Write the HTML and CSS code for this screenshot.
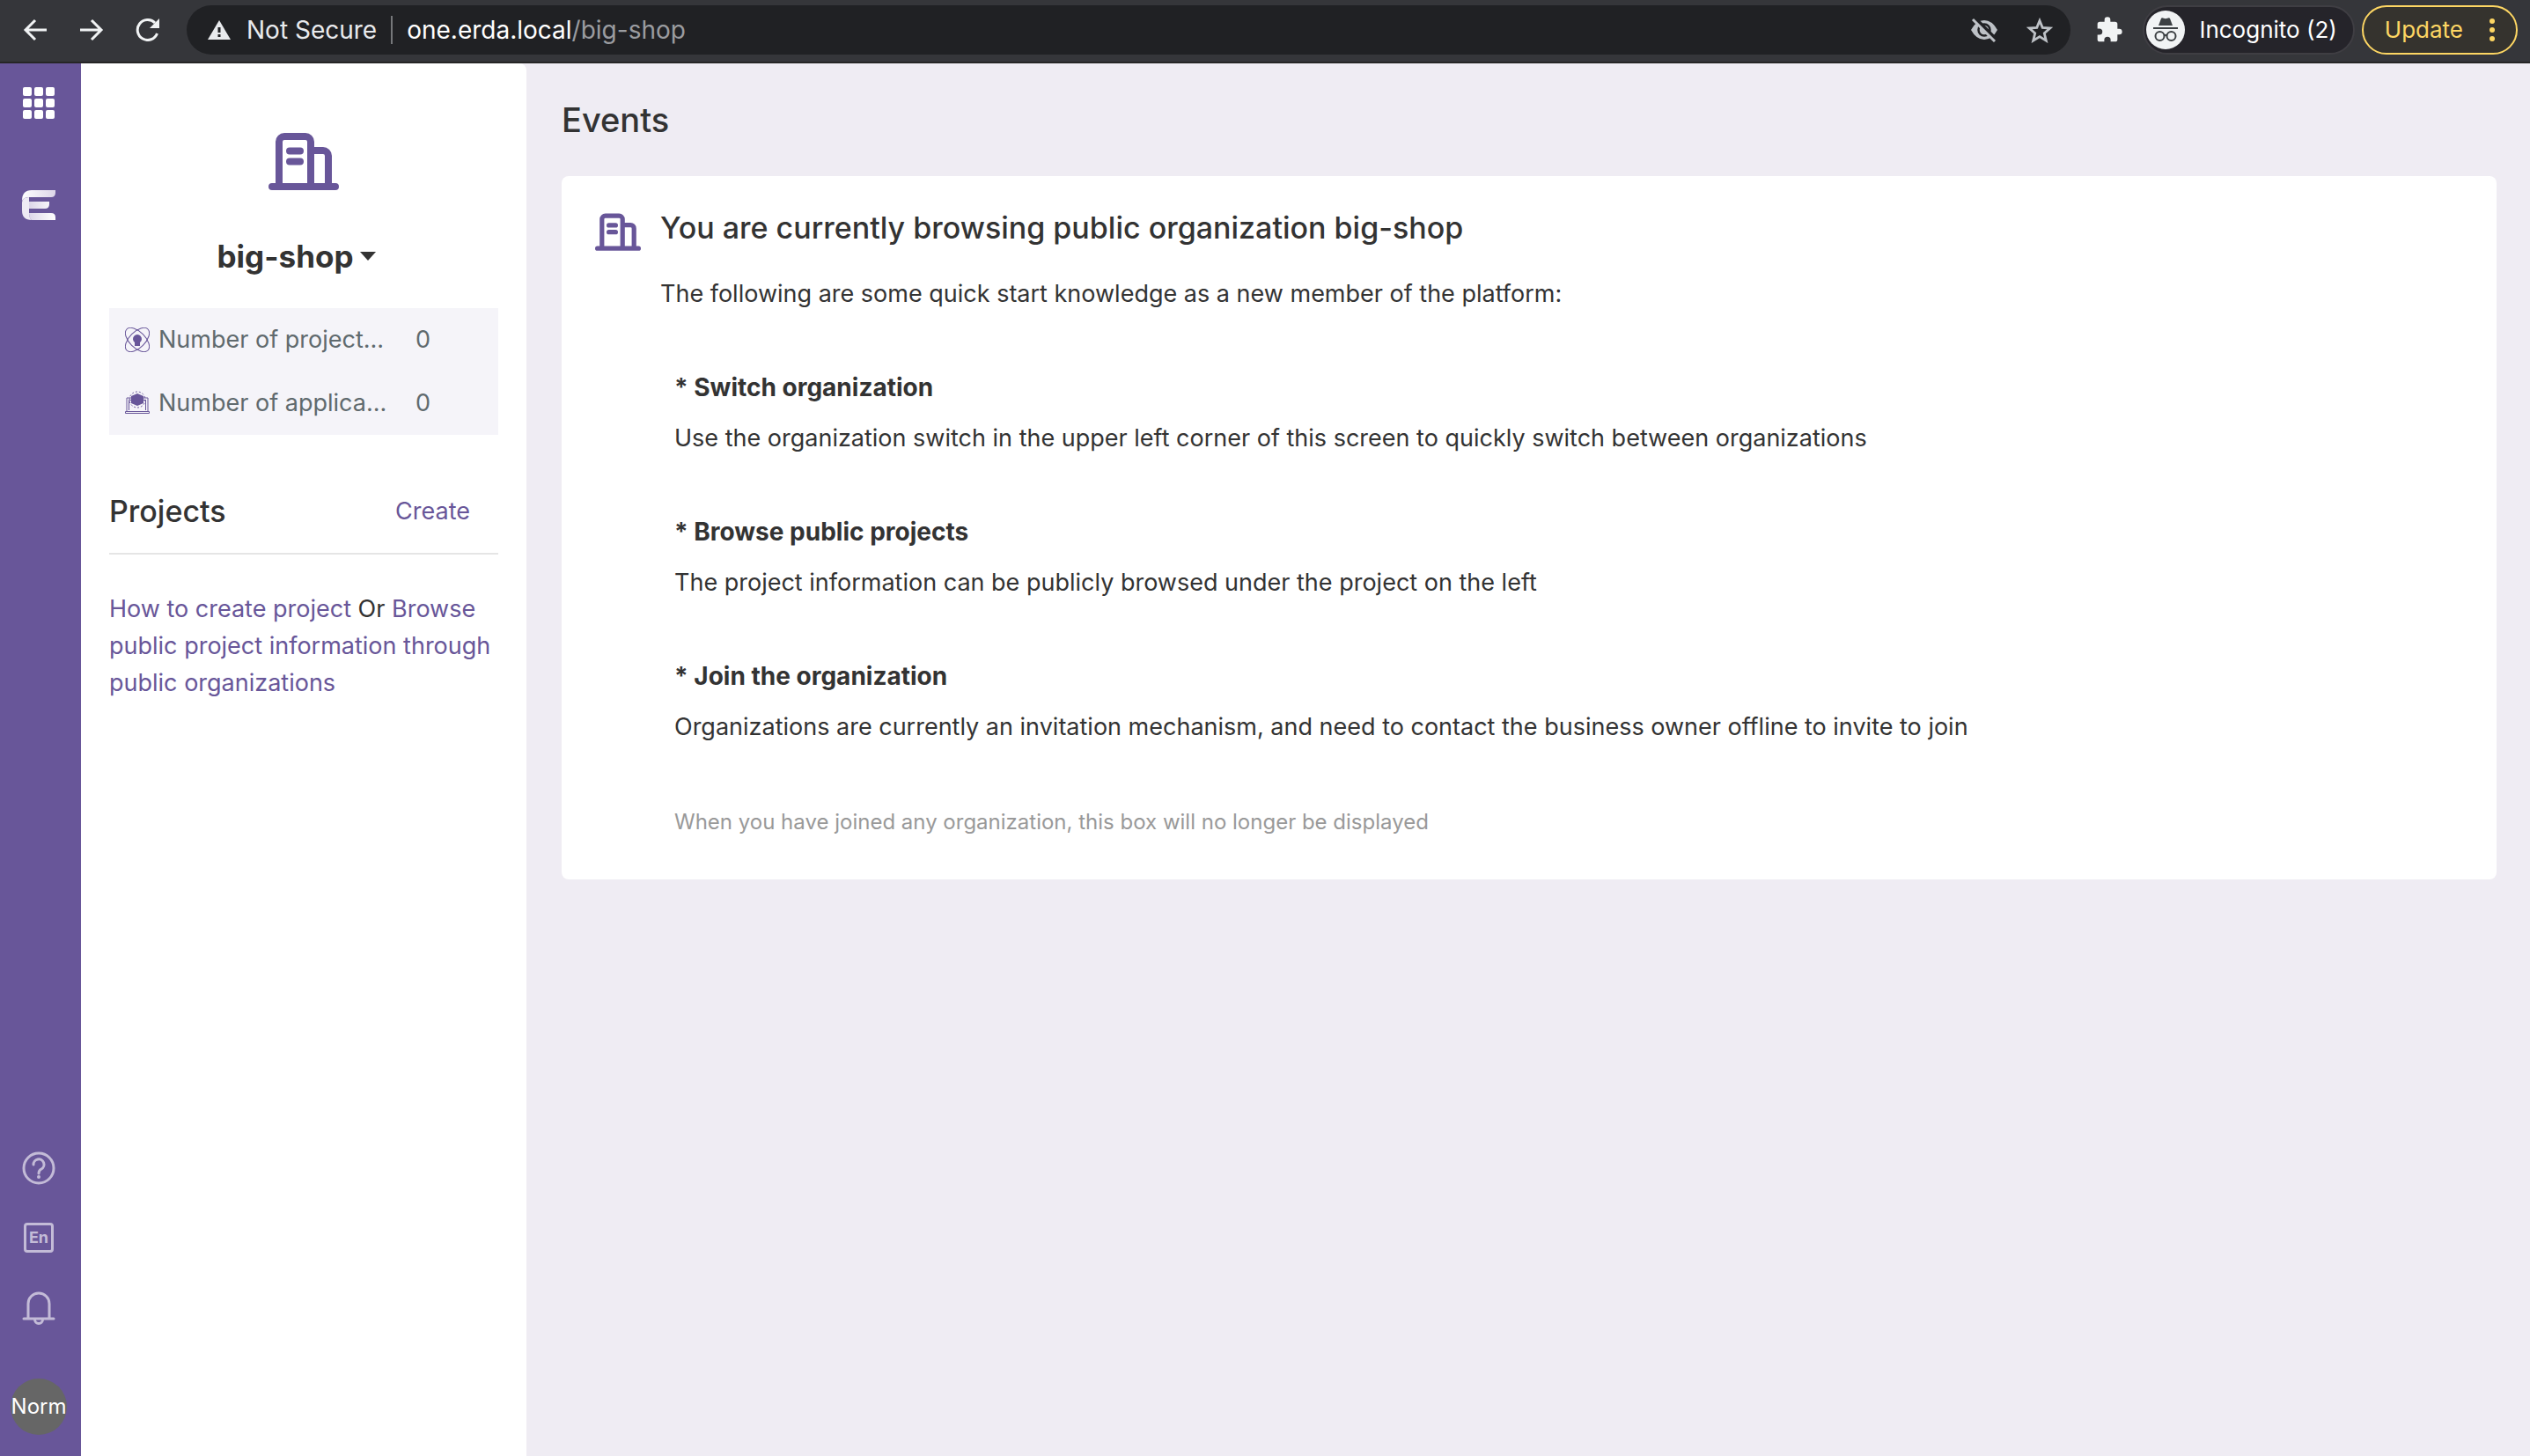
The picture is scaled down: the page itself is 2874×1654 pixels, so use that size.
FILE: index.html
```html
<!DOCTYPE html>
<html lang="en">
<head>
<meta charset="utf-8">
<title>big-shop</title>
<meta name="viewport" content="width=device-width, initial-scale=1">
<link rel="stylesheet" href="styles.css">
</head>
<body>
<svg class="defs" aria-hidden="true">
  <symbol id="building" viewBox="0 0 80 66">
    <path d="M12 60V10a6 6 0 0 1 6-6h24a6 6 0 0 1 6 6v50M50 20h12a6 6 0 0 1 6 6v34M4 61h72" fill="none" stroke="currentColor" stroke-width="8" stroke-linecap="round"/>
    <path d="M24 20.500h12M24 32.500h12" fill="none" stroke="currentColor" stroke-width="8" stroke-linecap="round"/>
  </symbol>
</svg>
<header class="browser">
  <button class="tool" aria-label="Back"><svg width="28" height="26" viewBox="0 0 28 26"><path d="M27 13H3M14 2 3 13l11 11" fill="none" stroke="currentColor" stroke-width="3"/></svg></button>
  <button class="tool" aria-label="Forward"><svg width="28" height="26" viewBox="0 0 28 26"><path d="M1 13h24M14 2l11 11-11 11" fill="none" stroke="currentColor" stroke-width="3"/></svg></button>
  <button class="tool" aria-label="Reload"><svg width="28" height="26" viewBox="0 0 28 26"><path d="M22 5A11.500 11.500 0 1 0 24.500 17" fill="none" stroke="currentColor" stroke-width="3"/><path d="M27 0v11H16z" fill="currentColor"/></svg></button>
  <div class="omnibox">
    <svg width="26" height="22" viewBox="0 0 26 22"><path d="M13 0 26 22H0z" fill="currentColor"/><path d="M13 8v6M13 16v3" stroke="#202124" stroke-width="3"/></svg>
    <span class="security">Not Secure</span>
    <span class="url"><b>one.erda.local</b>/big-shop</span>
    <button class="boxtool" aria-label="Cookies blocked"><svg width="32" height="28" viewBox="0 0 32 28"><path d="M1 14Q7 3 16 3t15 11q-6 11-15 11T1 14z" fill="currentColor"/><circle cx="16" cy="14" r="6.500" fill="none" stroke="#202124" stroke-width="2.500"/><path d="M5 0 31 26" stroke="#202124" stroke-width="4"/><path d="M3 2l25 25" stroke="currentColor" stroke-width="3"/></svg></button>
    <button class="boxtool" aria-label="Bookmark"><svg width="30" height="29" viewBox="0 0 30 29"><path d="M15 3.500l3.200 7.800 8.600.7-6.500 5.700 2 8.400-7.300-4.500-7.300 4.500 2-8.400L3.200 12l8.600-.7z" fill="none" stroke="currentColor" stroke-width="2.800"/></svg></button>
  </div>
  <button class="tool" aria-label="Extensions"><svg width="32" height="32" viewBox="0 0 24 24"><path d="M20.500 11H19V7a2 2 0 0 0-2-2h-4V3.500a2.500 2.500 0 0 0-5 0V5H4a2 2 0 0 0-2 2v3.800h1.500a2.700 2.700 0 0 1 0 5.400H2V20a2 2 0 0 0 2 2h3.800v-1.500a2.700 2.700 0 0 1 5.400 0V22H17a2 2 0 0 0 2-2v-4h1.500a2.500 2.500 0 0 0 0-5z" fill="currentColor"/></svg></button>
  <button class="profile"><svg width="44" height="44" viewBox="0 0 44 44"><circle cx="22" cy="22" r="22" fill="#f1f3f4"/><path d="M14 17l3-8q.5-1 2-.6l3 .8 3-.8q1.500-.4 2 .6l3 8zM8 19h28v2H8z" fill="#3c4043"/><g fill="none" stroke="#3c4043" stroke-width="2"><circle cx="15.500" cy="29" r="5"/><circle cx="28.500" cy="29" r="5"/><path d="M20.500 28.500q1.500-1.500 3 0"/></g></svg>Incognito (2)</button>
  <button class="update">Update<svg width="6" height="26" viewBox="0 0 6 26"><g fill="currentColor"><circle cx="3" cy="3" r="3"/><circle cx="3" cy="13" r="3"/><circle cx="3" cy="23" r="3"/></g></svg></button>
</header>
<div class="app">
  <nav class="rail">
    <button aria-label="Applications"><svg width="36" height="36" viewBox="0 0 36 36"><g fill="#fff"><rect width="10" height="10" rx="2"/><rect x="13" width="10" height="10" rx="2"/><rect x="26" width="10" height="10" rx="2"/><rect y="13" width="10" height="10" rx="2"/><rect x="13" y="13" width="10" height="10" rx="2"/><rect x="26" y="13" width="10" height="10" rx="2"/><rect y="26" width="10" height="10" rx="2"/><rect x="13" y="26" width="10" height="10" rx="2"/><rect x="26" y="26" width="10" height="10" rx="2"/></g></svg></button>
    <a class="logo" href="#" aria-label="Erda"><svg width="38" height="34" viewBox="0 0 38 34"><defs><linearGradient id="fade"><stop offset="0" stop-color="#fff"/><stop offset="1" stop-color="#dcd6e8"/></linearGradient><linearGradient id="rise"><stop offset="0" stop-color="#dcd6e8"/><stop offset="1" stop-color="#fff"/></linearGradient></defs><path d="M0 12Q0 0 11 0h27v3q0 5-5 5H8q-6 0-8 4z" fill="url(#fade)"/><path d="M8 8Q0 8 0 14v9q0 11 11 11-3-3-3-8V8z" fill="#eeeaf4"/><path d="M8 13h23v3q0 5-5 5H8zM8 26h25q5 0 5 5v3H11q-3-2-3-8z" fill="url(#rise)"/></svg></a>
    <button class="help" aria-label="Help"><svg width="38" height="38" viewBox="0 0 38 38"><g fill="none" stroke="currentColor" stroke-width="3"><circle cx="19" cy="19" r="17"/><path d="M13 15a6 6 0 1 1 9 5q-3 1.500-3 5" stroke-linecap="round"/></g><circle cx="19" cy="29" r="2" fill="currentColor"/></svg></button>
    <button class="lang" aria-label="Language: English">En</button>
    <button aria-label="Notifications"><svg width="38" height="38" viewBox="0 0 38 38"><g fill="none" stroke="currentColor" stroke-width="3" stroke-linecap="round"><path d="M7 31V14a12 12 0 0 1 24 0v17M2 31h34M14.500 32a4.500 4.500 0 0 0 9 0"/></g></svg></button>
    <button class="avatar">Norm</button>
  </nav>
  <aside class="side">
    <svg class="org-icon" width="80" height="66"><use href="#building"/></svg>
    <button class="org">big-shop<i class="caret"></i></button>
    <dl class="stats">
      <div><svg width="28" height="28" viewBox="0 0 28 28"><g fill="none" stroke="currentColor" stroke-width="1"><ellipse cx="14" cy="14" rx="17" ry="9" transform="rotate(45 14 14)"/><ellipse cx="14" cy="14" rx="17" ry="9" transform="rotate(-45 14 14)"/></g><path d="M11 21v-4a5 5 0 1 1 6 0v4z" fill="currentColor"/></svg><dt>Number of project...</dt><dd>0</dd></div>
      <div><svg width="28" height="28" viewBox="0 0 28 28"><g fill="none" stroke="currentColor"><path d="M2 23V8h24v15M.5 23.500h27v2H.5zM4.500 22V10.500h19V22"/><circle cx="14" cy="10" r="9" stroke-dasharray="2 2"/></g><path d="M14 3l7 3v8l-7 3-7-3V6z" fill="currentColor"/></svg><dt>Number of applica...</dt><dd>0</dd></div>
    </dl>
    <div class="projects"><h2>Projects</h2><a href="#">Create</a></div>
    <p class="guide"><a href="#">How to create project</a> Or <a href="#">Browse public project information through public organizations</a></p>
  </aside>
  <main>
    <h1>Events</h1>
    <section class="card">
      <svg width="52" height="44"><use href="#building"/></svg>
      <div>
        <h2>You are currently browsing public organization big-shop</h2>
        <p>The following are some quick start knowledge as a new member of the platform:</p>
        <div class="tips">
          <h3>* Switch organization</h3>
          <p>Use the organization switch in the upper left corner of this screen to quickly switch between organizations</p>
          <h3>* Browse public projects</h3>
          <p>The project information can be publicly browsed under the project on the left</p>
          <h3>* Join the organization</h3>
          <p>Organizations are currently an invitation mechanism, and need to contact the business owner offline to invite to join</p>
          <p class="note">When you have joined any organization, this box will no longer be displayed</p>
        </div>
      </div>
    </section>
  </main>
</div>
</body>
</html>
```
FILE: styles.css
```css
* { box-sizing: border-box; }
body {
  margin: 0;
  min-height: 100vh;
  display: flex;
  flex-direction: column;
  font: 27px/42px Inter, "Liberation Sans", sans-serif;
  color: #333;
  background: #efecf3;
}
h1, h2, h3, p, dl, dd { margin: 0; }
button { padding: 0; border: 0; background: none; color: inherit; font: inherit; }
a { color: #685699; text-decoration: none; }
svg { display: block; flex: none; }
.defs { position: absolute; width: 0; height: 0; }

.browser {
  display: flex;
  align-items: center;
  height: 72px;
  padding: 0 14px 2px 26px;
  border-bottom: 2px solid #262626;
  background: #35363a;
  color: #f1f3f4;
  font-size: 26px;
}
.tool { margin-right: 36px; }
.omnibox {
  flex: 1;
  display: flex;
  align-items: center;
  height: 56px;
  margin: 0 28px 0 -6px;
  padding: 0 20px 0 24px;
  border-radius: 28px;
  background: #202124;
  color: #e8eaed;
  font-size: 28px;
}
.security { margin-left: 18px; padding-right: 16px; border-right: 2px solid #75777a; line-height: 32px; }
.url { flex: 1; margin-left: 16px; color: #9a9ca0; }
.url b { font-weight: 400; color: #fff; }
.boxtool { margin-left: 32px; color: #bdc1c6; }
.browser > .omnibox + .tool { margin-right: 22px; }
.profile {
  display: flex;
  align-items: center;
  gap: 16px;
  height: 56px;
  padding: 0 18px 0 2px;
  border: 2px solid #3f3e43;
  border-radius: 28px;
  background: #25242a;
  color: #fff;
}
.update {
  display: flex;
  align-items: center;
  gap: 30px;
  height: 56px;
  margin-left: 8px;
  padding: 0 24px;
  border: 2px solid #fdd663;
  border-radius: 28px;
  background: #35332e;
  color: #fdd663;
}

.app { flex: 1; display: flex; }
.rail {
  flex: none;
  display: flex;
  flex-direction: column;
  align-items: center;
  width: 92px;
  padding: 27px 4px 24px 0;
  background: #685699;
  color: #c3bbd7;
}
.logo { margin-top: 81px; }
.help { margin-top: auto; margin-bottom: 43px; }
.lang {
  width: 34px;
  height: 34px;
  margin-bottom: 44px;
  border: 3px solid currentColor;
  border-radius: 4px;
  font-size: 18px;
  line-height: 28px;
  font-weight: 700;
}
.avatar {
  width: 64px;
  height: 64px;
  margin-top: 61px;
  border-radius: 50%;
  background: #666;
  color: #fff;
  font-size: 24px;
}

.side {
  flex: none;
  width: 506px;
  padding: 79px 32px 0;
  border-top-right-radius: 8px;
  background: #fff;
}
.org-icon { margin: 0 auto; color: #685699; }
.org {
  display: flex;
  align-items: center;
  gap: 8px;
  margin: 50px auto 0;
  padding-right: 16px;
  font-size: 35px;
  line-height: 48px;
  font-weight: 700;
}
.caret {
  border: 9px solid transparent;
  border-top: 10px solid #333;
  border-bottom: 0;
}
.stats { margin-top: 35px; background: #f5f4f9; color: #606a6e; }
.stats div { display: flex; align-items: center; height: 72px; padding: 0 18px; }
.stats svg { color: #685699; }
.stats dt {
  width: 262px;
  margin: 0 30px 0 10px;
  white-space: nowrap;
}
.projects {
  display: flex;
  align-items: center;
  justify-content: space-between;
  height: 96px;
  margin-top: 40px;
  padding-right: 32px;
  border-bottom: 2px solid #e5e5e5;
}
.projects h2, .card h2 { font-size: 34px; font-weight: 500; }
.guide { margin-top: 41px; }

main { flex: 1; padding: 32px 38px 0 40px; }
h1 { font-size: 38px; line-height: 64px; font-weight: 500; }
.card {
  display: flex;
  gap: 22px;
  margin-top: 32px;
  padding: 42px 38px 44px;
  border-radius: 8px;
  background: #fff;
}
.card > svg { color: #685699; }
.card h2 { margin: -4px 0 33px; }
.tips { padding-left: 16px; }
.tips h3 { margin-top: 64px; font-size: 28px; font-weight: 700; }
.tips p { margin-top: 16px; }
.tips .note { margin-top: 66px; color: #999; font-size: 24px; }
```
